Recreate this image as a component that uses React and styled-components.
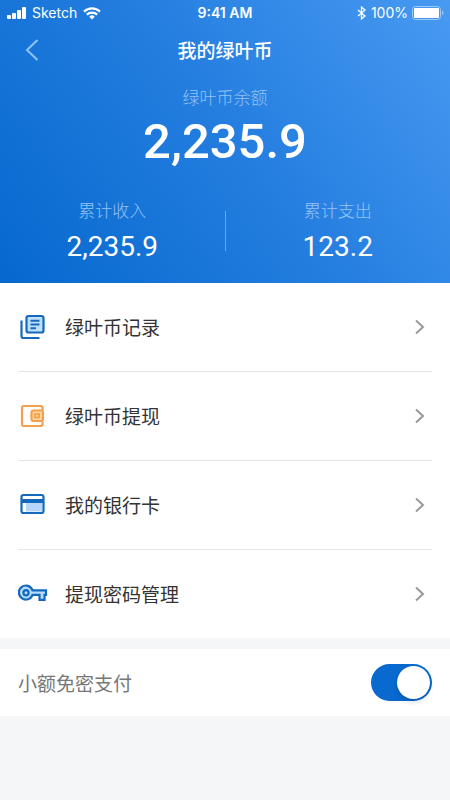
import React, { useState } from "react";
import styled, { createGlobalStyle } from "styled-components";

const GlobalStyle = createGlobalStyle`
  * {
    box-sizing: border-box;
  }
  body {
    margin: 0;
    background-color: #f5f6f8;
    font-family: Inter, "Noto Sans CJK SC", sans-serif;
    color: #333;
  }
`;

const Header = styled.header`
  height: 283px;
  color: #fff;
  background: linear-gradient(54deg, #0668ce 0%, #237ddf 50%, #489af1 100%);
`;

const StatusBar = styled.div`
  display: grid;
  grid-template-columns: 1fr auto 1fr;
  align-items: center;
  height: 26px;
  padding: 0 6px;
  font-size: 14px;
  line-height: 26px;
`;

const StatusSide = styled.div`
  display: flex;
  align-items: center;
  justify-content: ${props => (props.$end ? "flex-end" : "flex-start")};
  gap: ${props => (props.$end ? "4px" : "6px")};
`;

const Clock = styled.div`
  font-weight: 600;
`;

const NavBar = styled.div`
  display: grid;
  grid-template-columns: 48px 1fr 48px;
  align-items: center;
  height: 48px;
  padding: 0 8px;
`;

const BackButton = styled.button`
  display: flex;
  align-items: center;
  justify-content: center;
  height: 48px;
  padding: 0;
  border: 0;
  background: none;
  color: #8fc4fb;
`;

const Title = styled.h1`
  margin: 0;
  padding-top: 4px;
  text-align: center;
  font-size: 19px;
  font-weight: 500;
  line-height: 28px;
`;

const Balance = styled.div`
  padding-top: 12px;
  text-align: center;
`;

const Label = styled.div`
  color: #94c3f6;
  font-size: 17px;
  font-weight: 300;
  line-height: 24px;
`;

const BigAmount = styled.div`
  font-family: Roboto, sans-serif;
  font-size: 49px;
  font-weight: 500;
  line-height: 64px;
`;

const Stats = styled.div`
  display: flex;
  align-items: center;
  padding-top: 25px;
`;

const Stat = styled.div`
  flex: 1;
  text-align: center;
`;

const StatAmount = styled.div`
  font-family: Roboto, sans-serif;
  font-size: 28px;
  line-height: 48px;
`;

const Separator = styled.div`
  width: 1px;
  height: 40px;
  margin-bottom: 8px;
  background-color: #66a8ef;
`;

const Menu = styled.ul`
  margin: 0;
  padding: 0 18px;
  list-style: none;
  background-color: #fff;
`;

const MenuItem = styled.li`
  & + & {
    border-top: 1px solid #e6e6e6;
  }
`;

const MenuLink = styled.a`
  display: flex;
  align-items: center;
  height: 88px;
  color: #333;
  text-decoration: none;
`;

const IconBox = styled.span`
  display: flex;
  width: 47px;
`;

const MenuText = styled.span`
  flex: 1;
  padding-top: 4px;
  font-size: 19px;
  line-height: 28px;
`;

const Setting = styled.label`
  display: flex;
  align-items: center;
  justify-content: space-between;
  height: 67px;
  margin-top: 11px;
  padding: 0 18px;
  background-color: #fff;
  color: #777;
  font-size: 19px;
`;

const Toggle = styled.input`
  appearance: none;
  display: flex;
  align-items: center;
  justify-content: ${props => (props.checked ? "flex-end" : "flex-start")};
  width: 61px;
  height: 37px;
  margin: 0;
  padding: 0 2px;
  border-radius: 19px;
  background-color: ${props => (props.checked ? "#0869cf" : "#ccc")};

  &::before {
    content: "";
    width: 33px;
    height: 33px;
    border-radius: 50%;
    background-color: #fff;
    box-shadow: 0 3px 5px rgba(0, 0, 0, 0.15);
  }
`;

const SignalIcon = () => (
  <svg width="20" height="12" viewBox="0 0 20 12" fill="#fff">
    <rect x="1" y="8" width="4" height="4" rx="1" />
    <rect x="6" y="6" width="4" height="6" rx="1" />
    <rect x="11" y="3" width="4" height="9" rx="1" />
    <rect x="16" y="0" width="4" height="12" rx="1" />
  </svg>
);

const WifiIcon = () => (
  <svg width="18" height="13" viewBox="0 0 18 13" fill="none" stroke="#fff">
    <path d="M1 4.6a11.6 11.6 0 0 1 16 0" strokeWidth="2.2" />
    <path d="M3.8 7.6a7.6 7.6 0 0 1 10.4 0" strokeWidth="2.2" />
    <path d="M9 12.4 6.2 9.7a4 4 0 0 1 5.6 0z" fill="#fff" stroke="none" />
  </svg>
);

const BluetoothIcon = () => (
  <svg width="10" height="14" viewBox="0 0 10 14" fill="none" stroke="#fff">
    <path d="m1 4 7 6-3.5 3V1L8 4l-7 6" strokeWidth="1.3" />
  </svg>
);

const BatteryIcon = () => (
  <svg width="32" height="14" viewBox="0 0 32 14">
    <rect
      x="0.5"
      y="0.5"
      width="28"
      height="13"
      rx="3"
      fill="none"
      stroke="#9bcbfb"
    />
    <rect x="2" y="2" width="25" height="10" rx="1" fill="#fff" />
    <path d="M30 4.5q3 2.5 0 5z" fill="#9bcbfb" />
  </svg>
);

const BackIcon = () => (
  <svg width="14" height="24" viewBox="0 0 14 24" fill="none">
    <path d="M12.5 2 2 12l10.5 10" stroke="currentColor" strokeWidth="2" />
  </svg>
);

const ArrowIcon = () => (
  <svg width="18" height="16" viewBox="0 0 18 16" fill="none">
    <path d="m2 1.500 7 6.500-7 6.500" stroke="#999" strokeWidth="2" />
  </svg>
);

const RecordIcon = () => (
  <svg width="30" height="28" viewBox="0 0 30 28" fill="none" stroke="#1469bd">
    <rect x="8.5" y="3" width="17" height="16.5" rx="2" fill="#bfe0fc" />
    <g strokeWidth="2.2">
      <rect x="8.5" y="3" width="17" height="16.5" rx="2" />
      <path d="M12.5 7.8h9M12.5 11.5h9M12.5 15.2H18" strokeWidth="2" />
      <path d="M3.5 7.5V23q0 2 2 2h16" />
    </g>
  </svg>
);

const WalletIcon = () => (
  <svg width="30" height="28" viewBox="0 0 30 28" fill="none" stroke="#f4a04a">
    <path
      d="M24.5 8V6q0-2-2-2H6Q4 4 4 6v16q0 2 2 2h16.5q2 0 2-2v-2"
      strokeWidth="2.2"
    />
    <rect
      x="13.5"
      y="8.5"
      width="11.5"
      height="10.5"
      rx="2"
      fill="#ffd8a5"
      strokeWidth="2.2"
    />
    <rect x="17" y="12" width="4" height="3.5" strokeWidth="1.8" />
  </svg>
);

const CardIcon = () => (
  <svg width="30" height="28" viewBox="0 0 30 28" fill="none">
    <rect x="8" y="12" width="16" height="8.5" fill="#b5d8fa" />
    <rect
      x="3.5"
      y="4"
      width="22"
      height="18"
      rx="2"
      stroke="#1469bd"
      strokeWidth="2.2"
    />
    <path d="M4 10h21.500" stroke="#1469bd" strokeWidth="4" />
  </svg>
);

const KeyIcon = () => (
  <svg width="30" height="28" viewBox="0 0 30 28" fill="#b5dcfb">
    <path
      d="M14.5 10.3H28v4.5h-1.5v5h-5v-5h-7a7 7 0 1 1 0-4.5z"
      stroke="#1469bd"
      strokeWidth="2.2"
    />
    <circle cx="8" cy="12.8" r="2.6" stroke="#1469bd" strokeWidth="2.2" />
  </svg>
);

const MENU = [
  { id: "records", text: "绿叶币记录", Icon: RecordIcon },
  { id: "withdraw", text: "绿叶币提现", Icon: WalletIcon },
  { id: "cards", text: "我的银行卡", Icon: CardIcon },
  { id: "password", text: "提现密码管理", Icon: KeyIcon }
];

const App = () => {
  const [noPassword, setNoPassword] = useState(true);
  return (
    <>
      <GlobalStyle />
      <Header>
        <StatusBar>
          <StatusSide>
            <SignalIcon />
            <span>Sketch</span>
            <WifiIcon />
          </StatusSide>
          <Clock>9:41 AM</Clock>
          <StatusSide $end>
            <BluetoothIcon />
            <span>100%</span>
            <BatteryIcon />
          </StatusSide>
        </StatusBar>
        <NavBar>
          <BackButton type="button" aria-label="返回">
            <BackIcon />
          </BackButton>
          <Title>我的绿叶币</Title>
        </NavBar>
        <Balance>
          <Label>绿叶币余额</Label>
          <BigAmount>2,235.9</BigAmount>
        </Balance>
        <Stats>
          <Stat>
            <Label>累计收入</Label>
            <StatAmount>2,235.9</StatAmount>
          </Stat>
          <Separator />
          <Stat>
            <Label>累计支出</Label>
            <StatAmount>123.2</StatAmount>
          </Stat>
        </Stats>
      </Header>
      <Menu>
        {MENU.map(({ id, text, Icon }) => (
          <MenuItem key={id}>
            <MenuLink href={`#${id}`}>
              <IconBox>
                <Icon />
              </IconBox>
              <MenuText>{text}</MenuText>
              <ArrowIcon />
            </MenuLink>
          </MenuItem>
        ))}
      </Menu>
      <Setting>
        小额免密支付
        <Toggle
          type="checkbox"
          checked={noPassword}
          onChange={e => setNoPassword(e.target.checked)}
        />
      </Setting>
    </>
  );
};

export default App;
